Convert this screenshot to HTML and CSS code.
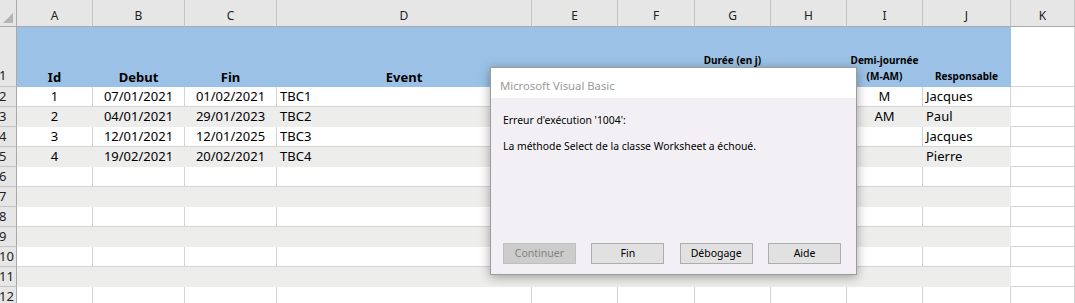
FILE: index.html
```html
<!DOCTYPE html>
<html lang="fr">

<head>
    <meta charset="UTF-8">
    <title>Planning - Erreur VBA</title>
    <link rel="stylesheet" href="styles.css">
</head>

<body>
    <div class="sheet">
        <div class="row head">
            <span class="corner">
                <svg width="16" height="26" viewBox="0 0 16 26"><polygon points="3,23 13,23 13,13" fill="#b4b4b4"/></svg>
            </span>
            <span class="col">A</span>
            <span class="col">B</span>
            <span class="col">C</span>
            <span class="col">D</span>
            <span class="col">E</span>
            <span class="col">F</span>
            <span class="col">G</span>
            <span class="col">H</span>
            <span class="col">I</span>
            <span class="col">J</span>
            <span class="col">K</span>
        </div>

        <div class="row title">
            <span class="rn">1</span>
            <span class="c th">Id</span>
            <span class="c th">Debut</span>
            <span class="c th">Fin</span>
            <span class="c th">Event</span>
            <span class="c th"></span>
            <span class="c th"></span>
            <span class="c th small high">Durée (en j)</span>
            <span class="c th"></span>
            <span class="c th small">Demi-journée<br>(M-AM)</span>
            <span class="c th small">Responsable</span>
            <span class="c"></span>
        </div>

        <div class="row">
            <span class="rn">2</span>
            <span class="c mid">1</span>
            <span class="c mid">07/01/2021</span>
            <span class="c mid">01/02/2021</span>
            <span class="c txt">TBC1</span>
            <span class="c"></span><span class="c"></span><span class="c"></span><span class="c"></span>
            <span class="c mid">M</span>
            <span class="c txt">Jacques</span>
            <span class="c"></span>
        </div>

        <div class="row band">
            <span class="rn">3</span>
            <span class="c mid">2</span>
            <span class="c mid">04/01/2021</span>
            <span class="c mid">29/01/2023</span>
            <span class="c txt">TBC2</span>
            <span class="c"></span><span class="c"></span><span class="c"></span><span class="c"></span>
            <span class="c mid">AM</span>
            <span class="c txt">Paul</span>
            <span class="c"></span>
        </div>

        <div class="row">
            <span class="rn">4</span>
            <span class="c mid">3</span>
            <span class="c mid">12/01/2021</span>
            <span class="c mid">12/01/2025</span>
            <span class="c txt">TBC3</span>
            <span class="c"></span><span class="c"></span><span class="c"></span><span class="c"></span>
            <span class="c"></span>
            <span class="c txt">Jacques</span>
            <span class="c"></span>
        </div>

        <div class="row band">
            <span class="rn">5</span>
            <span class="c mid">4</span>
            <span class="c mid">19/02/2021</span>
            <span class="c mid">20/02/2021</span>
            <span class="c txt">TBC4</span>
            <span class="c"></span><span class="c"></span><span class="c"></span><span class="c"></span>
            <span class="c"></span>
            <span class="c txt">Pierre</span>
            <span class="c"></span>
        </div>

        <div class="row">
            <span class="rn">6</span>
            <span class="c"></span><span class="c"></span><span class="c"></span><span class="c"></span><span class="c"></span>
            <span class="c"></span><span class="c"></span><span class="c"></span><span class="c"></span><span class="c"></span><span class="c"></span>
        </div>
        <div class="row band">
            <span class="rn">7</span>
            <span class="c"></span><span class="c"></span><span class="c"></span><span class="c"></span><span class="c"></span>
            <span class="c"></span><span class="c"></span><span class="c"></span><span class="c"></span><span class="c"></span><span class="c"></span>
        </div>
        <div class="row">
            <span class="rn">8</span>
            <span class="c"></span><span class="c"></span><span class="c"></span><span class="c"></span><span class="c"></span>
            <span class="c"></span><span class="c"></span><span class="c"></span><span class="c"></span><span class="c"></span><span class="c"></span>
        </div>
        <div class="row band">
            <span class="rn">9</span>
            <span class="c"></span><span class="c"></span><span class="c"></span><span class="c"></span><span class="c"></span>
            <span class="c"></span><span class="c"></span><span class="c"></span><span class="c"></span><span class="c"></span><span class="c"></span>
        </div>
        <div class="row">
            <span class="rn">10</span>
            <span class="c"></span><span class="c"></span><span class="c"></span><span class="c"></span><span class="c"></span>
            <span class="c"></span><span class="c"></span><span class="c"></span><span class="c"></span><span class="c"></span><span class="c"></span>
        </div>
        <div class="row band">
            <span class="rn">11</span>
            <span class="c"></span><span class="c"></span><span class="c"></span><span class="c"></span><span class="c"></span>
            <span class="c"></span><span class="c"></span><span class="c"></span><span class="c"></span><span class="c"></span><span class="c"></span>
        </div>
        <div class="row">
            <span class="rn">12</span>
            <span class="c"></span><span class="c"></span><span class="c"></span><span class="c"></span><span class="c"></span>
            <span class="c"></span><span class="c"></span><span class="c"></span><span class="c"></span><span class="c"></span><span class="c"></span>
        </div>
    </div>

    <!-- runtime error box sits over the sheet -->
    <div class="dialog">
        <div class="dlg-title">Microsoft Visual Basic</div>
        <div class="dlg-body">
            <p class="msg first">Erreur d'exécution '1004':</p>
            <p class="msg">La méthode Select de la classe Worksheet a échoué.</p>
            <div class="dlg-buttons">
                <button class="btn" disabled>Continuer</button>
                <button class="btn">Fin</button>
                <button class="btn">Débogage</button>
                <button class="btn">Aide</button>
            </div>
        </div>
    </div>
</body>

</html>
```

FILE: styles.css
```css
body {
    margin: 0;
    background-color: #ffffff;
    font-family: "Noto Sans", sans-serif;
    color: #000000;
    overflow: hidden;
}

.sheet {
    width: 1075px;
}

.row {
    display: grid;
    grid-template-columns: 17px 76px 92px 92px 255px 86px 77px 76px 76px 76px 88px 1fr;
    height: 20px;
}

/* column letters */
.head {
    height: 27px;
    background-color: #e6e6e6;
}

.corner {
    border-right: 1px solid #a9a9a9;
    border-bottom: 1px solid #a9a9a9;
    box-sizing: border-box;
}

.corner svg {
    display: block;
}

.col {
    box-sizing: border-box;
    border-right: 1px solid #c4c4c4;
    border-bottom: 1px solid #a9a9a9;
    text-align: center;
    font-size: 12px;
    line-height: 20px;
    padding-top: 6px;
    color: #222222;
}

/* row numbers */
.rn {
    box-sizing: border-box;
    background-color: #e6e6e6;
    border-right: 1px solid #a9a9a9;
    border-bottom: 1px solid #c4c4c4;
    font-size: 13px;
    line-height: 19px;
    text-indent: -1px;
    color: #222222;
    overflow: hidden;
    white-space: nowrap;
}

.c {
    box-sizing: border-box;
    border-right: 1px solid #d4d4d4;
    border-bottom: 1px solid #d4d4d4;
    font-size: 13px;
    line-height: 19px;
    white-space: nowrap;
    overflow: hidden;
}

.mid {
    text-align: center;
}

.txt {
    padding-left: 3px;
}

.band .c {
    background-color: #ededeb;
    border-color: #ededeb;
}

.band .c:last-child {
    background-color: #ffffff;
    border-color: #d4d4d4;
}

/* table header row */
.title {
    height: 60px;
}

.title .rn {
    display: flex;
    align-items: flex-end;
    padding-bottom: 1px;
}

.th {
    display: flex;
    flex-direction: column;
    justify-content: flex-end;
    text-align: center;
    background-color: #9bc2e6;
    border-color: #9bc2e6;
    font-weight: bold;
    line-height: 16px;
    padding-bottom: 1px;
}

.th.small {
    font-size: 10px;
    padding-bottom: 2px;
}

.th.high {
    padding-bottom: 18px;
}

/* error dialog */
.dialog {
    position: absolute;
    left: 490px;
    top: 67px;
    width: 367px;
    height: 208px;
    box-sizing: border-box;
    border: 1px solid #9c9c9c;
    display: flex;
    flex-direction: column;
    box-shadow: 0 2px 10px rgba(0, 0, 0, 0.35);
    background-color: #f2f0f4;
}

.dlg-title {
    height: 30px;
    background-color: #ffffff;
    color: #9a9a9a;
    font-size: 11.3px;
    line-height: 16px;
    padding: 10px 0 0 9px;
    box-sizing: border-box;
}

.dlg-body {
    flex: 1;
    display: flex;
    flex-direction: column;
    padding: 0 15px 10px 12px;
}

.msg {
    margin: 10px 0 0;
    font-size: 10.4px;
    line-height: 16px;
    color: #000000;
}

.msg.first {
    margin-top: 14px;
}

.dlg-buttons {
    margin-top: auto;
    display: flex;
    gap: 15.5px;
}

.btn {
    width: 73px;
    height: 21px;
    box-sizing: border-box;
    padding: 0;
    border: 1px solid #adadad;
    background-color: #e1e1e1;
    font-family: "Noto Sans", sans-serif;
    font-size: 10.5px;
    line-height: 19px;
    color: #000000;
}

.btn:disabled {
    background-color: #cccccc;
    border-color: #bfbfbf;
    color: #838383;
}
```
